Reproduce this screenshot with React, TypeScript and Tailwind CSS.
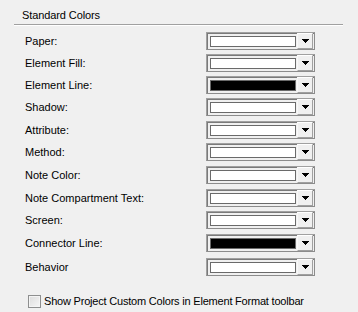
const rows = [
	{ label: "Paper:", color: "white", mt: "mt-[6px]" },
	{ label: "Element Fill:", color: "white", mt: "mt-[4px]" },
	{ label: "Element Line:", color: "black", mt: "mt-[4px]" },
	{ label: "Shadow:", color: "white", mt: "mt-[4px]" },
	{ label: "Attribute:", color: "white", mt: "mt-[5px]" },
	{ label: "Method:", color: "white", mt: "mt-[4px]" },
	{ label: "Note Color:", color: "white", mt: "mt-[5px]" },
	{ label: "Note Compartment Text:", color: "white", mt: "mt-[5px]" },
	{ label: "Screen:", color: "white", mt: "mt-[4px]" },
	{ label: "Connector Line:", color: "black", mt: "mt-[5px]" },
	{ label: "Behavior", color: "white", mt: "mt-[6px]" },
]

function ColorCombo({ color }: { color: string }) {
	return (
		<div className="flex items-center w-[109px] h-[18px] bg-[#f0f0f0] border border-t-[#a0a0a0] border-l-[#a0a0a0] border-r-[#8c8c8c] border-b-[#8c8c8c] shadow-[inset_1px_1px_0_#7a7a7a]">
			<div
				className={
					"ml-[3px] w-[86px] h-[11px] border border-[#6a6a6a] " +
					(color === "black" ? "bg-black" : "bg-white")
				}
			/>
			<div className="ml-auto mr-px flex items-center justify-center w-[16px] h-[16px] bg-[#f0f0f0] border-l border-t border-l-[#f8f8f8] border-t-white border-r border-b border-r-[#a0a0a0] border-b-[#a0a0a0]">
				<svg width="7" height="4" viewBox="0 0 7 4" shapeRendering="crispEdges">
					<path d="M0 0h7v1h-1v1h-1v1h-1v1h-1v-1h-1v-1h-1v-1h-1z" fill="#000" />
				</svg>
			</div>
		</div>
	)
}

export default function App() {
	return (
		<div className="w-[358px] h-[312px] bg-[#f0f0f0] text-black text-[11px] font-['Liberation_Sans',Arial,sans-serif] overflow-hidden">
			<div className="pt-[9px] pl-[22px] h-[22px] leading-[13px] tracking-[-0.1px]">Standard Colors</div>
			<div className="mt-[2px] ml-[14px] w-[329px] h-px bg-[#a0a0a0]" />
			<div className="ml-[14px] w-[329px] h-px bg-white" />

			<div className="flex flex-col">
				{rows.map((row) => (
					<div key={row.label} className={"flex items-center h-[18px] " + row.mt}>
						<div className="w-[206px] pl-[25px] leading-[13px]">{row.label}</div>
						<ColorCombo color={row.color} />
					</div>
				))}
			</div>

			<div className="mt-[19px] ml-[28px] flex items-center gap-[3px]">
				<div className="w-[13px] h-[13px] border border-[#8e8f8f] bg-gradient-to-br from-[#dcdcdc] to-[#f6f6f6] shadow-[inset_0_0_0_1px_#f4f4f4]" />
				<span className="leading-[13px] tracking-[-0.2px]">Show Project Custom Colors in Element Format toolbar</span>
			</div>
		</div>
	)
}
